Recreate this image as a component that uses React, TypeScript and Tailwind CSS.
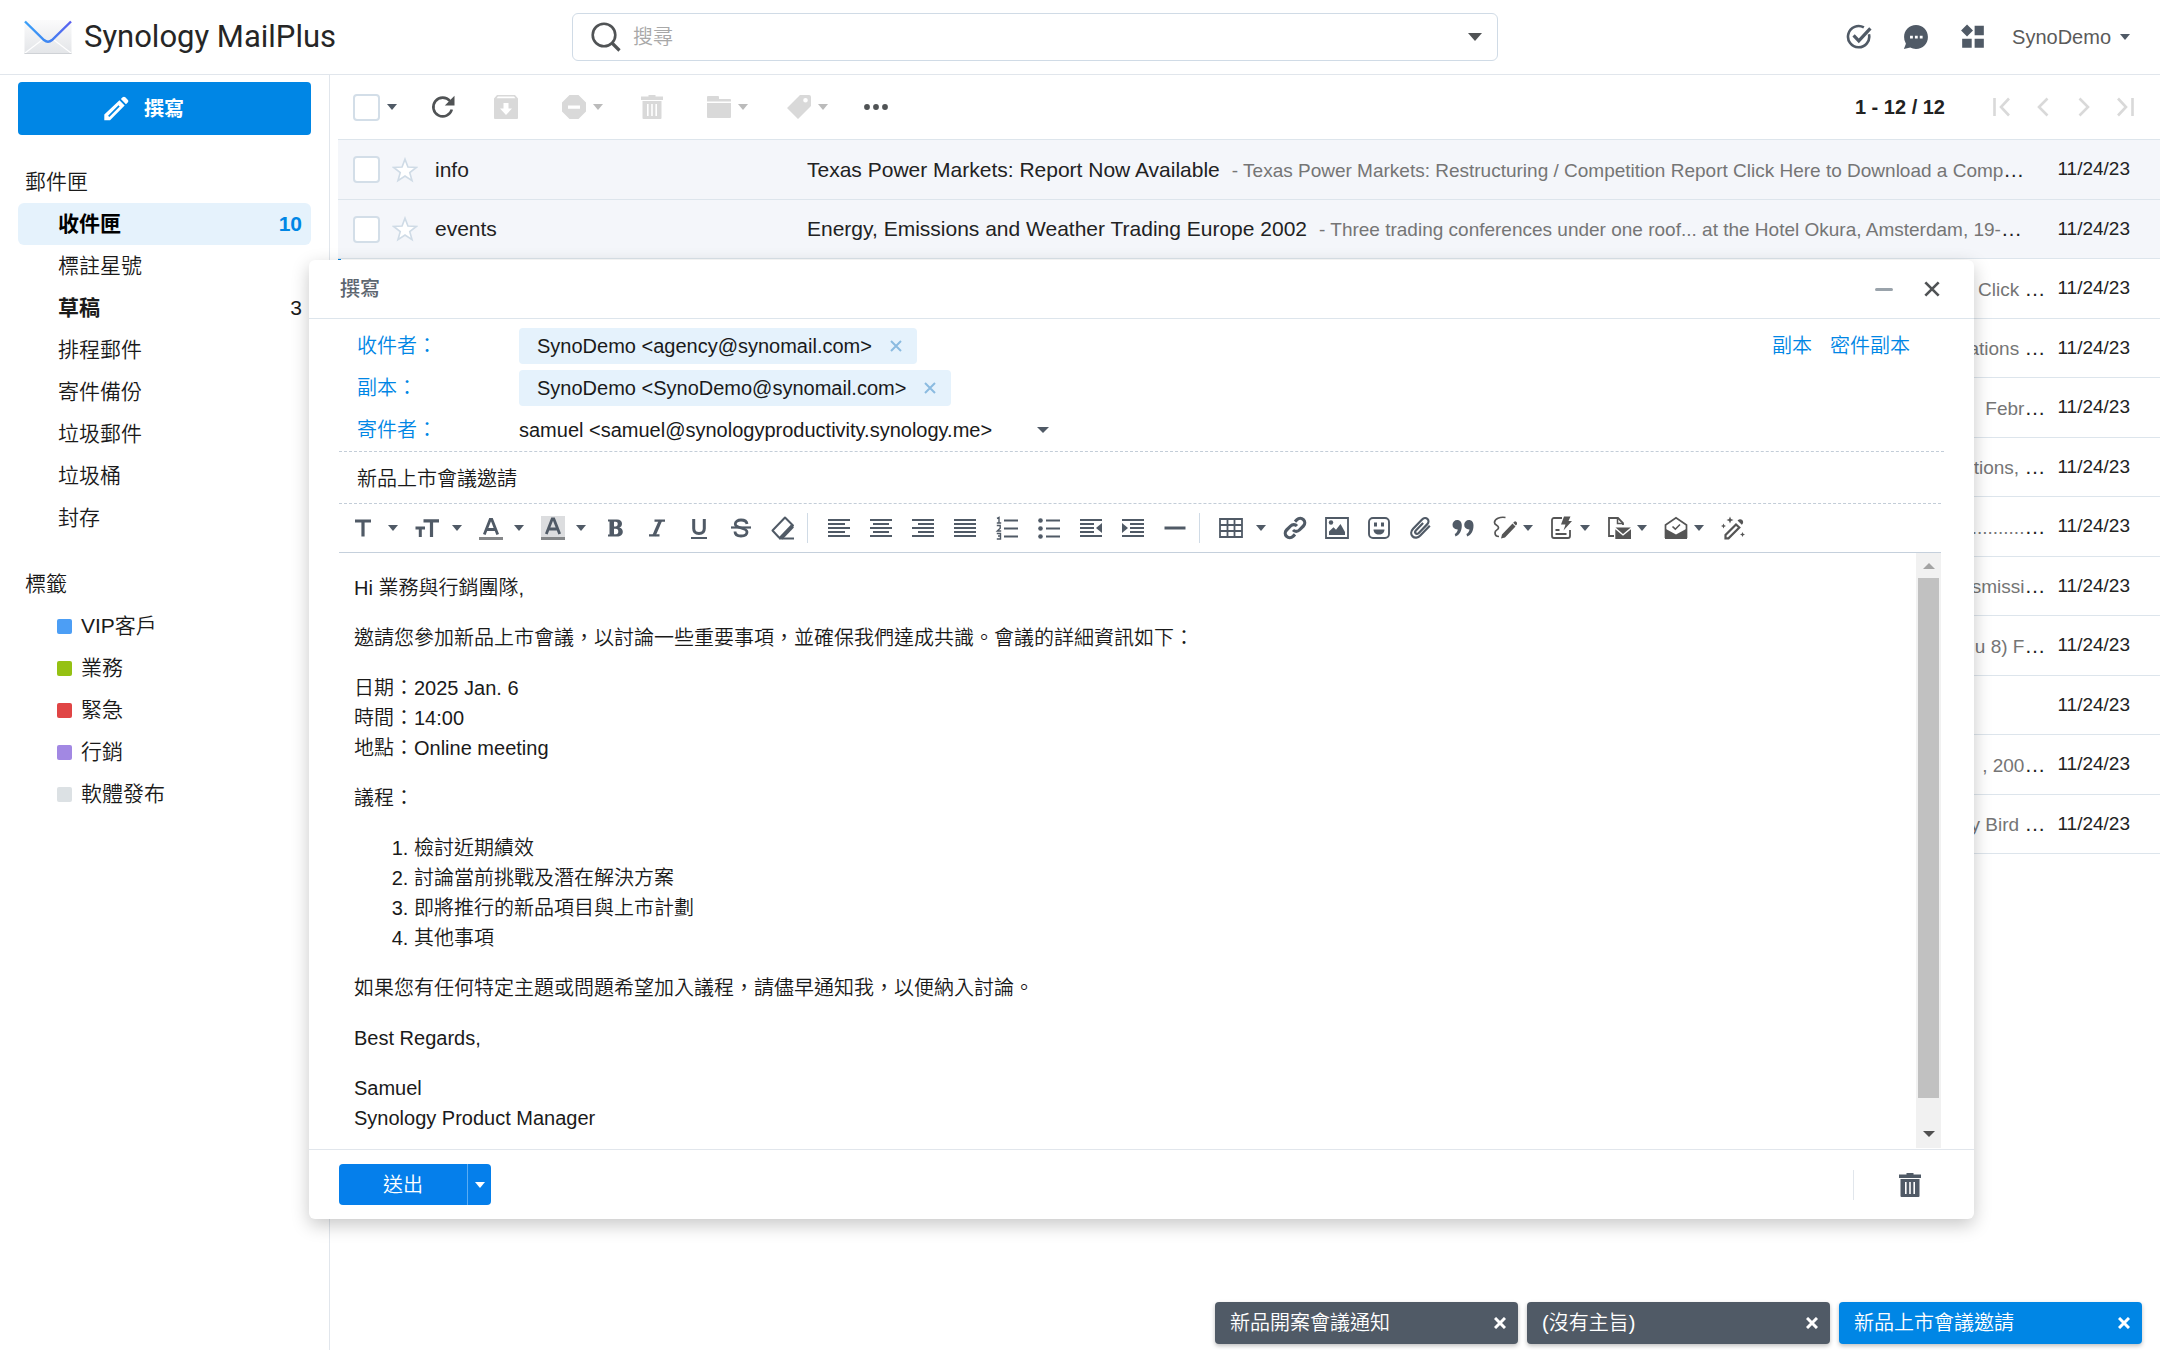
import React, { useState } from "react";

type IconProps = { className?: string };

function Svg({ className = "size-6", children }: { className?: string; children: React.ReactNode }) {
  return (
    <svg viewBox="0 0 24 24" className={`${className} block shrink-0`} fill="none" stroke="none" aria-hidden="true">
      {children}
    </svg>
  );
}

function Caret({ className = "text-[#505a66]" }: IconProps) {
  return (
    <svg viewBox="0 0 10 6" className={`${className} block h-1.5 w-2.5 shrink-0`} fill="currentColor" aria-hidden="true">
      <path d="M0 0h10L5 6z" />
    </svg>
  );
}

const line = { stroke: "currentColor", strokeWidth: 2, fill: "none" } as const;

/* ---------- Header icons ---------- */

function MailLogo() {
  return (
    <svg viewBox="0 0 48 40" className="h-10 w-12 shrink-0" aria-hidden="true">
      <defs>
        <linearGradient id="flap" x1="0" x2="1" y1="0" y2="0">
          <stop offset="0" stopColor="#3aa0f8" />
          <stop offset="0.5" stopColor="#3f86f2" />
          <stop offset="1" stopColor="#5a5ef0" />
        </linearGradient>
        <linearGradient id="paper" x1="0" x2="0" y1="0" y2="1">
          <stop offset="0" stopColor="#fbfbfc" />
          <stop offset="1" stopColor="#e3e5e8" />
        </linearGradient>
      </defs>
      <rect x="0.5" y="3" width="47" height="34" rx="1" fill="url(#paper)" />
      <path d="M1 36 18 23M47 36 30 23" stroke="#fff" strokeWidth="1.2" />
      <path d="M0.5 36.5h47" stroke="#cfd2d6" strokeWidth="1.2" />
      <path d="M1 4.5 20 23q4 3.600 8 0L47 4.500" fill="none" stroke="url(#flap)" strokeWidth="2.400" />
    </svg>
  );
}

function SearchIcon() {
  return (
    <svg viewBox="0 0 30 30" className="size-[30px] shrink-0" fill="none" stroke="#505355" aria-hidden="true">
      <circle cx="13" cy="13" r="11.300" strokeWidth="2.600" />
      <path d="m21 21 7.500 7.500" strokeWidth="3.200" />
    </svg>
  );
}

const CheckCircle = () => (
  <Svg className="size-[26px]">
    <path d="M21.200 9.500A9.800 9.800 0 1 1 16.500 3.200" stroke="currentColor" strokeWidth="2.400" />
    <path d="m7 10.500 4.800 5L22.500 4" stroke="currentColor" strokeWidth="3" />
  </Svg>
);

const ChatBubble = () => (
  <Svg className="size-[26px]">
    <path
      fill="currentColor"
      fillRule="evenodd"
      d="M12 1c6.300 0 11 4.800 11 11s-4.700 11-11 11c-2 0-3.800-.400-5.300-1.200L.800 23l1.900-4.800A10.900 10.900 0 0 1 1 12C1 5.800 5.700 1 12 1ZM6.500 10.800v2.600h2.600v-2.600Zm4.500 0v2.600h2.600v-2.600Zm4.500 0v2.600h2.600v-2.600Z"
    />
  </Svg>
);

const AppGrid = () => (
  <Svg className="size-[26px]">
    <path
      fill="currentColor"
      d="M6.500.500 12 6l-5.500 5.500L1 6ZM13.500 1.500H22v8.800h-8.500ZM2 13.500h8.800V22H2ZM13.500 13.500H22V22h-8.500Z"
    />
  </Svg>
);

/* ---------- List toolbar icons ---------- */

const Pencil = () => (
  <Svg className="size-[26px]">
    <path
      fill="currentColor"
      fillRule="evenodd"
      d="M15.200 4 20 8.800 6.500 22.300H1.200v-5.300ZM14.300 8.600 4.700 18.200 5.800 19.300 15.400 9.700ZM16.500 2.800l1.600-1.600a1.800 1.800 0 0 1 2.500 0l2.200 2.200a1.800 1.800 0 0 1 0 2.500L21.200 7.500Z"
    />
  </Svg>
);

const Refresh = () => (
  <Svg>
    <path d="M20.800 14.500A9.400 9.400 0 1 1 19 6" stroke="currentColor" strokeWidth="2.600" />
    <path fill="currentColor" d="M23.500.800v9.700h-9.700Z" />
  </Svg>
);

const Archive = () => (
  <Svg>
    <path
      fill="currentColor"
      fillRule="evenodd"
      d="M3 0h18l3 3.500V23a1 1 0 0 1-1 1H1a1 1 0 0 1-1-1V3.500ZM4 1.500 2.500 3.200h19L20 1.500ZM9.500 8v5.500H6l6 6.500 6-6.500h-3.500V8Z"
    />
  </Svg>
);

const StopSign = () => (
  <Svg>
    <path fill="currentColor" fillRule="evenodd" d="M7.500 0h9L24 7.500v9L16.500 24h-9L0 16.500v-9ZM6 10.500v3.200h12v-3.200Z" />
  </Svg>
);

const Trash = () => (
  <Svg>
    <path
      fill="currentColor"
      fillRule="evenodd"
      d="M8.500 0h7v1.500H23V5H1V1.500h7.500ZM2.500 6h19v17a1 1 0 0 1-1 1h-17a1 1 0 0 1-1-1ZM7 9v12h1.600V9Zm4.200 0v12h1.600V9Zm4.200 0v12H17V9Z"
    />
  </Svg>
);

const Folder = () => (
  <Svg>
    <path fill="currentColor" d="M0 2a1 1 0 0 1 1-1h10a1 1 0 0 1 1 1v2h11a1 1 0 0 1 1 1v1.500H0ZM0 8h24v14a1 1 0 0 1-1 1H1a1 1 0 0 1-1-1Z" />
  </Svg>
);

const Tag = () => (
  <Svg>
    <path
      fill="currentColor"
      fillRule="evenodd"
      d="M13 0h9a2 2 0 0 1 2 2v9L11 24 0 13ZM18.500 3a2.300 2.300 0 1 0 0 4.600 2.300 2.300 0 0 0 0-4.600Z"
    />
  </Svg>
);

const Dots = () => (
  <Svg>
    <circle cx="3" cy="12" r="2.900" fill="currentColor" />
    <circle cx="12" cy="12" r="2.900" fill="currentColor" />
    <circle cx="21" cy="12" r="2.900" fill="currentColor" />
  </Svg>
);

const First = () => (
  <Svg>
    <path d="M4.500 3v18M19 3.500 11 12l8 8.500" stroke="currentColor" strokeWidth="2.600" />
  </Svg>
);
const Prev = () => (
  <Svg>
    <path d="m16.500 3.500-8.500 8.500 8.500 8.500" stroke="currentColor" strokeWidth="2.600" />
  </Svg>
);
const Next = () => (
  <Svg>
    <path d="m7.500 3.500 8.500 8.500-8.500 8.500" stroke="currentColor" strokeWidth="2.600" />
  </Svg>
);
const Last = () => (
  <Svg>
    <path d="M19.500 3v18M5 3.500l8 8.500-8 8.500" stroke="currentColor" strokeWidth="2.600" />
  </Svg>
);

const Star = () => (
  <Svg className="size-[26px]">
    <path
      d="m12 2 2.700 7.300 7.800.300-6.100 4.800 2.100 7.500L12 17.600l-6.500 4.300 2.100-7.500L1.500 9.600l7.800-.300Z"
      fill="#fff"
      stroke="#cfdbe6"
      strokeWidth="1.500"
    />
  </Svg>
);

/* ---------- Editor icons ---------- */

const FontFamily = () => (
  <Svg>
    <path d="M4 5h16M12 5v15.500" stroke="currentColor" strokeWidth="3.200" />
  </Svg>
);
const FontSize = () => (
  <Svg>
    <path d="M8.500 4.800H24M16.500 4.800V21" stroke="currentColor" strokeWidth="3.200" />
    <path d="M0.500 12h9.500M5.300 12v9" stroke="currentColor" strokeWidth="3" />
  </Svg>
);
const TextColor = () => (
  <Svg>
    <path d="M5.300 18.500 11.200 3.500h1.600l5.900 15M7.500 13.500h9" {...line} strokeWidth={2.800} />
    <path fill="#858789" d="M0 21h24v3H0Z" />
  </Svg>
);
const Highlight = () => (
  <Svg>
    <path fill="#dcdddf" d="M0 0h24v21H0Z" />
    <path d="M5.300 18 11.200 3h1.600l5.900 15M7.500 13h9" {...line} strokeWidth={2.800} />
    <path fill="#858789" d="M0 21h24v3H0Z" />
  </Svg>
);
const Bold = () => (
  <Svg>
    <path
      fill="currentColor"
      fillRule="evenodd"
      d="M5 3.500h9c3.300 0 5 1.700 5 4.200 0 1.900-1 3.200-2.700 3.800 2.200.500 3.500 2 3.500 4.200 0 3-2.200 4.800-5.800 4.800H5v-2h1.500v-13H5ZM11 5.800v4.700h1.700c1.300 0 2-.900 2-2.400s-.7-2.300-2-2.300ZM11 12.700v5.500h2c1.500 0 2.300-1 2.300-2.800 0-1.700-.8-2.700-2.400-2.700Z"
    />
  </Svg>
);
const Italic = () => (
  <Svg>
    <path d="M9.500 4.700H20M4 19.300h10.500" stroke="currentColor" strokeWidth="2.200" />
    <path d="M15.500 4.500 9 19.500" stroke="currentColor" strokeWidth="3.200" />
  </Svg>
);
const Underline = () => (
  <Svg>
    <path d="M6.700 3v9.500c0 3.500 1.900 5 5.300 5s5.300-1.500 5.300-5V3" {...line} strokeWidth={3} />
    <path d="M4 22h16" {...line} />
  </Svg>
);
const Strike = () => (
  <Svg>
    <path d="M18 8c-.3-2.700-2.500-4-6-4-3.300 0-5.700 1.500-5.700 4 0 5 11.700 3 11.700 8 0 2.700-2.500 4-6 4s-6-1.500-6-4.500" {...line} strokeWidth={2.800} />
    <path d="M2 11.500h20" {...line} strokeWidth={2.200} />
  </Svg>
);
const Eraser = () => (
  <Svg>
    <path d="M14 1.500 22 9.500 10.500 21.500H8L1.500 14.500Z" {...line} strokeLinejoin="round" />
    <path d="M21.500 10 10 22" stroke="currentColor" strokeWidth="4" />
    <path d="M8 22.500h15" {...line} />
  </Svg>
);
const AlignLeft = () => (
  <Svg>
    <path d="M1 4h22M1 8h17M1 12h22M1 16h17M1 20h22" {...line} />
  </Svg>
);
const AlignCenter = () => (
  <Svg>
    <path d="M1 4h22M4 8h16M1 12h22M4 16h16M1 20h22" {...line} />
  </Svg>
);
const AlignRight = () => (
  <Svg>
    <path d="M1 4h22M7 8h16M1 12h22M7 16h16M1 20h22" {...line} />
  </Svg>
);
const Justify = () => (
  <Svg>
    <path d="M1 4h22M1 8h22M1 12h22M1 16h22M1 20h22" {...line} />
  </Svg>
);
const OrderedList = () => (
  <Svg>
    <path d="M9 4.500h14M9 12.500h14M9 20.500h14" {...line} />
    <path
      d="M2 2.500 4 1.500V7M1.800 7h4.400M1.800 9.500h3.400v2.700L2.300 15h3.900M1.800 17.500H5.500v2.500H3M5.500 20v3H1.800"
      stroke="currentColor"
      strokeWidth="1.400"
    />
  </Svg>
);
const BulletList = () => (
  <Svg>
    <path d="M9 4.500h14M9 12.500h14M9 20.500h14" {...line} />
    <circle cx="3.500" cy="4.500" r="2.300" fill="currentColor" />
    <circle cx="3.500" cy="12.500" r="2.300" fill="currentColor" />
    <circle cx="3.500" cy="20.500" r="2.300" fill="currentColor" />
  </Svg>
);
const Outdent = () => (
  <Svg>
    <path d="M1 4h22M1 8h14M1 12h14M1 16h14M1 20h22" {...line} />
    <path fill="currentColor" d="M23 7v10l-6-5Z" />
  </Svg>
);
const Indent = () => (
  <Svg>
    <path d="M1 4h22M9 8h14M9 12h14M9 16h14M1 20h22" {...line} />
    <path fill="currentColor" d="M1 7v10l6-5Z" />
  </Svg>
);
const Rule = () => (
  <Svg>
    <path d="M1.500 12h21" {...line} strokeWidth={3} />
  </Svg>
);
const TableIcon = () => (
  <Svg>
    <path d="M1 3h22v18H1ZM1 9h22M1 15h22M8.500 3v18M15.500 3v18" {...line} strokeWidth={1.800} />
  </Svg>
);
const LinkIcon = () => (
  <Svg>
    <path
      d="m10 14a4.500 4.500 0 0 0 6.400 0l4-4A4.500 4.500 0 0 0 14 3.600l-2 2M14 10a4.500 4.500 0 0 0-6.400 0l-4 4A4.500 4.500 0 0 0 10 20.400l2-2"
      {...line}
      strokeWidth={3.200}
    />
  </Svg>
);
const ImageIcon = () => (
  <Svg>
    <path d="M1 2h22v20H1Z" {...line} strokeWidth={1.800} />
    <circle cx="6" cy="6.500" r="2.200" fill="currentColor" />
    <path fill="currentColor" d="M4 19v-3.500l4.500-4.300 2.500 2.500L15.500 8l4.500 8v3Z" />
  </Svg>
);
const Smile = () => (
  <Svg>
    <rect x="2" y="2" width="20" height="20" rx="4" {...line} strokeWidth={1.900} />
    <path fill="currentColor" d="M7 6.500h3v4H7ZM14 6.500h3v4h-3ZM6.500 13.500h11c0 3-2.300 5-5.500 5s-5.500-2-5.500-5Z" />
  </Svg>
);
const Clip = () => (
  <Svg>
    <path
      d="m20.800 9.800-9.500 9.800c-2.300 2.400-5.700 2.800-7.700.800s-1.800-5.200.500-7.600l9-9.300c1.700-1.700 4-1.900 5.400-.500s1.300 3.700-.400 5.400l-8.300 8.600c-1 1-2.300 1.200-3.100.400s-.6-2.100.4-3.100l7-7.300"
      {...line}
      strokeWidth={2.200}
    />
  </Svg>
);
const Quote = () => (
  <Svg>
    <path
      fill="currentColor"
      d="M1.500 8.800A4.700 4.700 0 0 1 6.200 4c2.800 0 4.600 2.200 4.600 5.500 0 5.500-2.300 9.500-6.300 11l-.8-2.400c1.900-1.300 2.900-2.900 3.100-4.700-3.200.200-5.300-1.700-5.300-4.600ZM13.200 8.800A4.700 4.700 0 0 1 17.900 4c2.800 0 4.600 2.200 4.600 5.500 0 5.500-2.300 9.500-6.300 11l-.8-2.400c1.900-1.300 2.900-2.900 3.100-4.700-3.200.200-5.300-1.700-5.300-4.600Z"
    />
  </Svg>
);
const Signature = () => (
  <Svg>
    <path d="M12.500 1.500C7 .500 1.500 3 1.500 6.500c0 3.200 4 2.500 4 5.300 0 2.500-3.500 1.700-3.500 5 0 2.500 2 3.700 4 3.700" {...line} strokeWidth={1.700} />
    <path fill="currentColor" d="M19.500 7.500 22.500 10.500 12 21.500l-4 1 1-4ZM20.200 6.800l1-1a1.400 1.400 0 0 1 2 0l.600.600a1.400 1.400 0 0 1 0 2l-1 1Z" />
  </Svg>
);
const QuickText = () => (
  <Svg>
    <path d="M12 2H4a2 2 0 0 0-2 2v16a2 2 0 0 0 2 2h14a2 2 0 0 0 2-2v-6" {...line} strokeWidth={1.800} />
    <path d="M5.500 14h4M5.500 18h11" {...line} strokeWidth={1.800} />
    <path fill="currentColor" d="M14 .500h6.500L18.500 5H22l-8.500 9.500L15.500 8.500H11Z" />
  </Svg>
);
const Template = () => (
  <Svg>
    <path d="M7 20H2V2h9l5 5v2" {...line} strokeWidth={1.800} />
    <path d="M10.500 2v5.500H16" {...line} strokeWidth={1.500} />
    <path fill="currentColor" d="M8.500 11.500h15.300L16 18ZM8.300 13.300 16 19.800l8-6.500V23H8.300Z" />
  </Svg>
);
const ReadReceipt = () => (
  <Svg>
    <path d="M1.500 22V9L12 1.800 22.500 9v13" {...line} strokeWidth={1.700} />
    <path fill="currentColor" d="M1 12.500 12 18.500l11-6V23H1Z" />
    <path d="m8.500 10.500 2.800 2.700L16 8.500" {...line} strokeWidth={1.600} />
  </Svg>
);
const Wand = () => (
  <Svg>
    <path d="M15 8.500 4.500 19v3.300h3L18.300 11.500Z" {...line} strokeWidth={2.200} />
    <path
      fill="currentColor"
      d="M16.500 4.500a3.200 3.200 0 0 1 4.800-.500 3.200 3.200 0 0 1-.500 4.800ZM9 .500l1 2.500 2.500 1L10 5 9 7.500 8 5 5.500 4 8 3ZM2.500 7.500l.8 1.800 1.700.700-1.700.800-.8 1.700-.8-1.700L0 10l1.700-.700ZM21.500 16l.800 1.700 1.700.800-1.700.800-.8 1.700-.8-1.700-1.700-.800 1.700-.800Z"
    />
  </Svg>
);

function Cross({ className = "size-3 stroke-2" }: IconProps) {
  return (
    <svg viewBox="0 0 12 12" className={`${className} block shrink-0`} fill="none" stroke="currentColor" aria-hidden="true">
      <path d="m1 1 10 10M11 1 1 11" />
    </svg>
  );
}

/* ---------- Data ---------- */

const folders = [
  { name: "收件匣", count: 10, active: true, bold: true },
  { name: "標註星號" },
  { name: "草稿", count: 3, bold: true },
  { name: "排程郵件" },
  { name: "寄件備份" },
  { name: "垃圾郵件" },
  { name: "垃圾桶" },
  { name: "封存" },
];

const labels = [
  { name: "VIP客戶", color: "bg-[#4c9ef5]" },
  { name: "業務", color: "bg-[#95c113]" },
  { name: "緊急", color: "bg-[#e04545]" },
  { name: "行銷", color: "bg-[#a288e3]" },
  { name: "軟體發布", color: "bg-[#dce1e4]" },
];

type Mail = { from?: string; subject?: string; snippet: string; current?: boolean };

const mails: Mail[] = [
  {
    from: "info",
    subject: "Texas Power Markets: Report Now Available",
    snippet: "Texas Power Markets: Restructuring / Competition Report Click Here to Download a Comp",
  },
  {
    from: "events",
    subject: "Energy, Emissions and Weather Trading Europe 2002",
    snippet: "Three trading conferences under one roof... at the Hotel Okura, Amsterdam, 19-",
  },
  { snippet: "Click ", current: true },
  { snippet: "ations " },
  { snippet: "Febr" },
  { snippet: "tions, " },
  { snippet: "............" },
  { snippet: "smissi" },
  { snippet: "u 8) F" },
  { snippet: "" },
  { snippet: ", 200" },
  { snippet: "y Bird " },
];

/* ---------- Page parts ---------- */

function CheckBox({ label }: { label: string }) {
  return (
    <input
      type="checkbox"
      aria-label={label}
      className="size-[27px] shrink-0 appearance-none rounded border-2 border-[#d3dee8] bg-white checked:bg-[#0086e5]"
    />
  );
}

function Header() {
  return (
    <header className="flex h-[75px] shrink-0 items-center border-b border-[#e1e6ec] pr-[30px] pl-6">
      <div className="flex w-[548px] shrink-0 items-center gap-3">
        <MailLogo />
        <h1 className="font-['Roboto',sans-serif] text-[31px] leading-10 font-normal text-[#262626]">Synology MailPlus</h1>
      </div>
      <div className="flex h-12 w-[926px] items-center rounded-md border border-[#d0dbe6] pr-2.5 pl-[18px]">
        <SearchIcon />
        <input
          type="search"
          aria-label="搜尋"
          placeholder="搜尋"
          className="ml-3 min-w-0 flex-1 bg-transparent text-[20px] outline-none placeholder:text-[#a8a8a8]"
        />
        <button aria-label="搜尋選項" className="flex h-8 w-6 items-center justify-center">
          <svg viewBox="0 0 14 8" className="h-2 w-3.5" fill="#505355" aria-hidden="true">
            <path d="M0 0h14L7 8z" />
          </svg>
        </button>
      </div>
      <div className="ml-auto flex items-center text-[#505a66]">
        <button aria-label="工作" className="flex w-[57px] items-center">
          <CheckCircle />
        </button>
        <button aria-label="聊天" className="flex w-[57px] items-center">
          <ChatBubble />
        </button>
        <button aria-label="應用程式" className="flex w-[52px] items-center">
          <AppGrid />
        </button>
        <button className="flex items-center gap-[9px] text-[20px] text-[#5a5a5a]">
          SynoDemo
          <Caret />
        </button>
      </div>
    </header>
  );
}

function Sidebar() {
  return (
    <aside className="w-[330px] shrink-0 border-r border-[#e1e6ec] px-[18px] pt-[7px] text-[21px] text-[#1a1a1a]">
      <button className="mb-[26px] flex h-[53px] w-full items-center rounded bg-[#0086e5] pr-4 pl-[85px] text-[20px] font-bold text-white">
        <Pencil />
        <span className="ml-[15px]">撰寫</span>
      </button>
      <h2 className="flex h-[42px] items-center px-[7px]">郵件匣</h2>
      <nav>
        {folders.map((f) => (
          <a
            key={f.name}
            href="#"
            className={`flex h-[42px] items-center justify-between rounded-md pr-[9px] pl-10 ${
              f.active ? "bg-[#e5f2fc] text-black" : ""
            }`}
          >
            <span className={f.bold ? "font-bold" : ""}>{f.name}</span>
            {f.count && <span className={f.active ? "font-bold text-[#0086e5]" : ""}>{f.count}</span>}
          </a>
        ))}
      </nav>
      <h2 className="mt-6 flex h-[42px] items-center px-[7px]">標籤</h2>
      <nav>
        {labels.map((l) => (
          <a key={l.name} href="#" className="flex h-[42px] items-center gap-[9px] pl-[39px]">
            <span className={`size-[15px] rounded-xs ${l.color}`} />
            {l.name}
          </a>
        ))}
      </nav>
    </aside>
  );
}

function ToolButton({ label, icon, caret, width }: { label: string; icon: React.ReactNode; caret?: boolean; width: string }) {
  return (
    <button aria-label={label} className={`flex items-center gap-[7px] text-[#d9d9d9] ${width}`}>
      {icon}
      {caret && <Caret className="text-[#bbb]" />}
    </button>
  );
}

function MailList() {
  return (
    <main className="min-w-0 flex-1 pl-2">
      <div className="flex h-16 items-center pr-[23px] pl-[15px]">
        <CheckBox label="全選" />
        <button aria-label="選取選項" className="ml-[7px] flex w-11">
          <Caret />
        </button>
        <button aria-label="重新整理" className="flex w-[63px] text-[#505355]">
          <Refresh />
        </button>
        <ToolButton label="封存" icon={<Archive />} width="w-[68px]" />
        <ToolButton label="垃圾郵件" icon={<StopSign />} caret width="w-[78px]" />
        <ToolButton label="刪除" icon={<Trash />} width="w-[67px]" />
        <ToolButton label="移動" icon={<Folder />} caret width="w-20" />
        <ToolButton label="標籤" icon={<Tag />} caret width="w-[77px]" />
        <button aria-label="更多" className="flex text-[#505355]">
          <Dots />
        </button>
        <div className="ml-auto flex items-center text-[#d9d9d9]">
          <span className="mr-[45px] text-[20px] font-bold text-[#222]">1 - 12 / 12</span>
          <div className="flex gap-[17px]">
            <button aria-label="第一頁"><First /></button>
            <button aria-label="上一頁"><Prev /></button>
            <button aria-label="下一頁"><Next /></button>
            <button aria-label="最後一頁"><Last /></button>
          </div>
        </div>
      </div>
      <ul className="border-t border-[#dde5ec] text-[21px] text-[#222]">
        {mails.map((m, i) => (
          <li
            key={i}
            className={`flex h-[60px] items-center border-b border-[#dde5ec] pr-[30px] pl-[15px] even:h-[59px] ${
              m.from ? "bg-[#f4f6fa]" : "bg-white"
            } ${m.current ? "border-l-[3px] border-l-[#0086e5]" : ""}`}
          >
            {m.from && (
              <>
                <CheckBox label={m.from} />
                <button aria-label="加上星號" className="ml-3">
                  <Star />
                </button>
                <span className="ml-[17px] w-[372px] shrink-0">{m.from}</span>
                <span className="shrink-0">{m.subject}</span>
              </>
            )}
            <span className={`flex min-w-0 flex-1 items-baseline whitespace-pre ${m.from ? "ml-3" : "justify-end pr-3"}`}>
              <span className="text-[19px] text-[#757575]">{m.from ? `- ${m.snippet}` : m.snippet}</span>
              {m.snippet && <span>…</span>}
            </span>
            <time className="ml-auto shrink-0 text-[19px]">11/24/23</time>
          </li>
        ))}
      </ul>
    </main>
  );
}

function Chip({ text }: { text: string }) {
  return (
    <span className="flex h-9 items-center gap-[18px] rounded bg-[#e5f2fc] pr-[15px] pl-[18px]">
      {text}
      <button aria-label={`移除 ${text}`} className="text-[#8bbbe0]">
        <Cross />
      </button>
    </span>
  );
}

type Tool = { label: string; icon: React.ReactNode; size?: "wide" | "medium" | "snug" };

const textTools: Tool[] = [
  { label: "字型", icon: <FontFamily />, size: "wide" },
  { label: "字型大小", icon: <FontSize />, size: "wide" },
  { label: "文字顏色", icon: <TextColor />, size: "medium" },
  { label: "醒目提示", icon: <Highlight />, size: "medium" },
  { label: "粗體", icon: <Bold /> },
  { label: "斜體", icon: <Italic /> },
  { label: "底線", icon: <Underline /> },
  { label: "刪除線", icon: <Strike /> },
  { label: "清除格式", icon: <Eraser /> },
];
const paragraphTools: Tool[] = [
  { label: "靠左", icon: <AlignLeft /> },
  { label: "置中", icon: <AlignCenter /> },
  { label: "靠右", icon: <AlignRight /> },
  { label: "左右對齊", icon: <Justify /> },
  { label: "編號清單", icon: <OrderedList /> },
  { label: "項目清單", icon: <BulletList /> },
  { label: "減少縮排", icon: <Outdent /> },
  { label: "增加縮排", icon: <Indent /> },
  { label: "水平線", icon: <Rule /> },
];
const insertTools: Tool[] = [
  { label: "表格", icon: <TableIcon />, size: "wide" },
  { label: "連結", icon: <LinkIcon /> },
  { label: "圖片", icon: <ImageIcon /> },
  { label: "表情符號", icon: <Smile /> },
  { label: "附件", icon: <Clip /> },
  { label: "引言", icon: <Quote /> },
];
const mailTools: Tool[] = [
  { label: "簽名", icon: <Signature />, size: "snug" },
  { label: "罐頭訊息", icon: <QuickText />, size: "snug" },
  { label: "範本", icon: <Template />, size: "snug" },
  { label: "讀取回條", icon: <ReadReceipt />, size: "snug" },
  { label: "AI 助理", icon: <Wand /> },
];

const toolWidth = {
  wide: "w-16 gap-[13px]",
  medium: "w-[62px] gap-[11px]",
  snug: "w-[57px] gap-[6px]",
};

function ToolGroup({ tools, className = "" }: { tools: Tool[]; className?: string }) {
  return (
    <div className={`flex items-center ${className}`}>
      {tools.map((t) => (
        <button
          key={t.label}
          aria-label={t.label}
          className={`flex h-9 items-center pl-[9px] ${t.size ? toolWidth[t.size] : "w-[42px]"}`}
        >
          {t.icon}
          {t.size && <Caret />}
        </button>
      ))}
    </div>
  );
}

function Compose() {
  const [subject, setSubject] = useState("新品上市會議邀請");
  return (
    <section
      aria-label="撰寫"
      className="absolute top-[260px] right-[186px] left-[309px] rounded-md bg-white text-[20px] text-[#1a1a1a] shadow-[0_6px_18px_rgba(0,0,0,0.22)]"
    >
      <header className="flex h-[59px] items-center border-b border-[#dde5ec] pr-[34px] pl-[31px]">
        <h2 className="text-[20px] font-medium text-[#5d666f]">撰寫</h2>
        <button aria-label="最小化" className="ml-auto flex size-6 items-center justify-center">
          <span className="h-[3px] w-[18px] rounded-xs bg-[#9aa3ab]" />
        </button>
        <button aria-label="關閉" className="ml-7 text-[#505355]">
          <Cross className="size-4 stroke-2" />
        </button>
      </header>

      <div className="mx-[30px] border-b border-dashed border-[#c3cdd8] pt-1.5 pl-[18px]">
        <div className="flex h-[42px] items-center">
          <a href="#" className="w-[162px] text-[#0086e5]">收件者：</a>
          <Chip text="SynoDemo <agency@synomail.com>" />
          <div className="mr-[34px] ml-auto flex gap-[18px] text-[#0086e5]">
            <a href="#">副本</a>
            <a href="#">密件副本</a>
          </div>
        </div>
        <div className="flex h-[42px] items-center">
          <a href="#" className="w-[162px] text-[#0086e5]">副本：</a>
          <Chip text="SynoDemo <SynoDemo@synomail.com>" />
        </div>
        <div className="flex h-[42px] items-center">
          <label htmlFor="sender" className="w-[162px] text-[#0086e5]">寄件者：</label>
          <select id="sender" className="w-[518px] appearance-none bg-transparent">
            <option>samuel &lt;samuel@synologyproductivity.synology.me&gt;</option>
          </select>
          <svg viewBox="0 0 12 6" className="h-1.5 w-3" fill="#505a66" aria-hidden="true">
            <path d="M0 0h12L6 6z" />
          </svg>
        </div>
      </div>

      <div className="mr-[33px] ml-[30px]">
        <input
          aria-label="主旨"
          value={subject}
          onChange={(e) => setSubject(e.target.value)}
          className="block h-[52px] w-full border-b border-dashed border-[#c3cdd8] pl-[18px] outline-none"
        />
        <div className="flex h-[49px] items-center border-b border-[#c5d0dc] pl-[3px] text-[#505a66]">
          <ToolGroup tools={textTools} />
          <span className="mr-[10px] ml-[3px] h-[30px] w-px bg-[#d0dbe6]" />
          <ToolGroup tools={paragraphTools} />
          <span className="mr-[10px] ml-[3px] h-[30px] w-px bg-[#d0dbe6]" />
          <ToolGroup tools={insertTools} />
          <ToolGroup tools={mailTools} className="text-[#555]" />
        </div>
        <div className="flex pb-[1px]">
          <article className="flex-1 space-y-5 pt-5 pr-4 pb-[15px] pl-[15px] leading-[30px]">
            <p>Hi 業務與行銷團隊,</p>
            <p>邀請您參加新品上市會議，以討論一些重要事項，並確保我們達成共識。會議的詳細資訊如下：</p>
            <p>
              日期：2025 Jan. 6<br />
              時間：14:00<br />
              地點：Online meeting
            </p>
            <p>議程：</p>
            <ol className="list-decimal pl-[60px]">
              <li>檢討近期績效</li>
              <li>討論當前挑戰及潛在解決方案</li>
              <li>即將推行的新品項目與上市計劃</li>
              <li>其他事項</li>
            </ol>
            <p>如果您有任何特定主題或問題希望加入議程，請儘早通知我，以便納入討論。</p>
            <p>Best Regards,</p>
            <p>
              Samuel<br />
              Synology Product Manager
            </p>
          </article>
          <div className="flex w-[25px] flex-col items-center bg-[#f1f1f1]">
            <span className="flex h-[25px] items-center">
              <svg viewBox="0 0 12 6" className="h-1.5 w-3" fill="#a3a3a3" aria-hidden="true">
                <path d="M0 6h12L6 0z" />
              </svg>
            </span>
            <span className="w-[21px] flex-1 bg-[#c1c1c1]" />
            <span className="flex h-[50px] items-end pb-[11px]">
              <svg viewBox="0 0 12 6" className="h-1.5 w-3" fill="#505050" aria-hidden="true">
                <path d="M0 0h12L6 6z" />
              </svg>
            </span>
          </div>
        </div>
      </div>

      <footer className="flex h-[70px] items-center border-t border-[#e1e6ec] pr-[52px] pl-[30px]">
        <div className="flex h-[41px] rounded bg-[#057feb] text-white">
          <button className="w-32">送出</button>
          <button aria-label="傳送選項" className="flex w-6 items-center justify-center border-l border-[#5aacf3]">
            <Caret className="text-white" />
          </button>
        </div>
        <span className="mr-11 ml-auto h-[30px] w-px bg-[#e1e6ec]" />
        <button aria-label="捨棄" className="text-[#505a66]">
          <Trash />
        </button>
      </footer>
    </section>
  );
}

function ComposeTab({ title, active }: { title: string; active?: boolean }) {
  return (
    <div
      className={`flex h-[42px] w-[303px] items-center justify-between rounded pr-3 pl-[15px] text-[20px] text-white shadow-[0_2px_4px_rgba(0,0,0,0.25)] ${
        active ? "bg-[#0086e5]" : "bg-[#505a66]"
      }`}
    >
      <button>{title}</button>
      <button aria-label={`關閉 ${title}`}>
        <Cross className="size-3 stroke-3" />
      </button>
    </div>
  );
}

export default function App() {
  return (
    <div
      lang="zh-TW"
      className="relative flex min-h-screen flex-col overflow-hidden bg-white font-['Liberation_Sans','Noto_Sans_CJK_TC',sans-serif] font-[350]"
    >
      <Header />
      <div className="flex flex-1">
        <Sidebar />
        <MailList />
      </div>
      <Compose />
      <div className="absolute right-[18px] bottom-1.5 flex gap-[9px]">
        <ComposeTab title="新品開案會議通知" />
        <ComposeTab title="(沒有主旨)" />
        <ComposeTab title="新品上市會議邀請" active />
      </div>
    </div>
  );
}
